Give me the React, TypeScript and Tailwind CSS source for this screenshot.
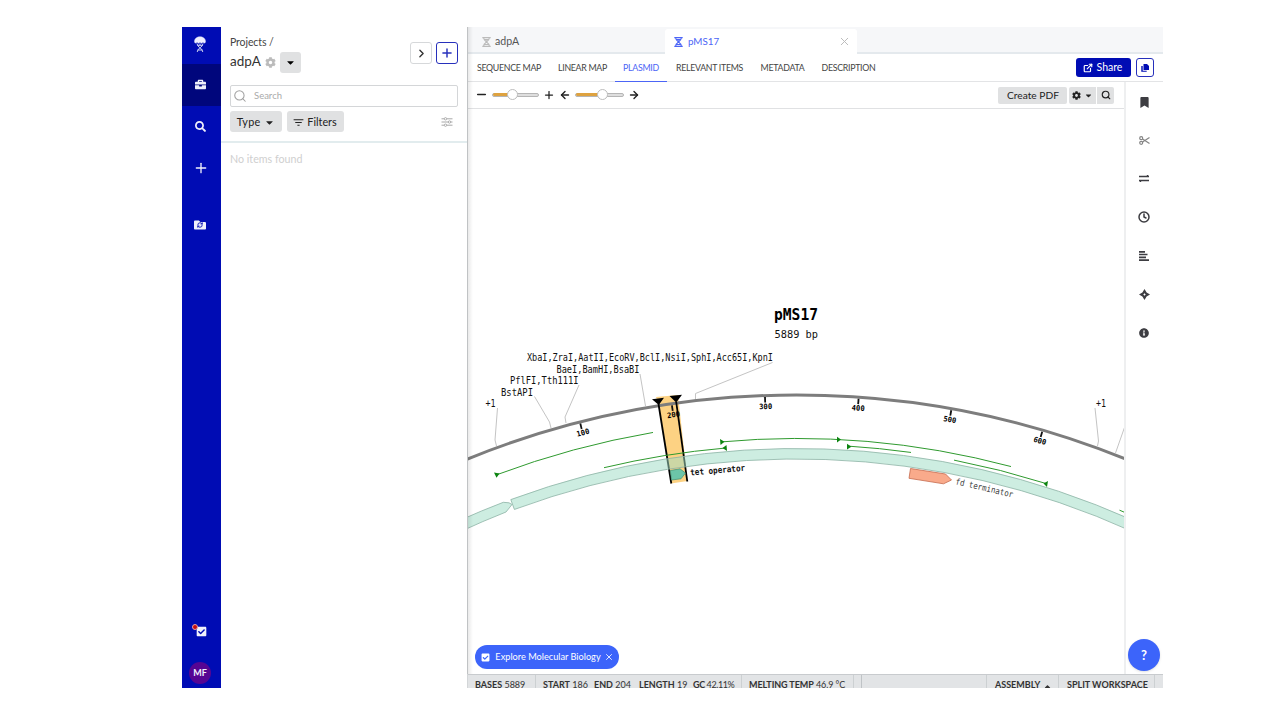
import React from "react";
import { FaBriefcase, FaSearch, FaCog, FaCaretDown, FaCaretUp, FaFolder, FaBookmark, FaInfoCircle, FaCheckSquare } from "react-icons/fa";
import { MdFilterList } from "react-icons/md";
import { ChevronRight, Plus, Minus, ArrowLeft, ArrowRight, Search, X, ExternalLink, Clock, RefreshCw } from "lucide-react";

const CX = 796.5;
const CY = 1273;
const yAt = (r: number, x: number) => CY - Math.sqrt(r * r - (x - CX) * (x - CX));
const arc = (r: number, x1: number, x2: number) =>
  `M${x1} ${yAt(r, x1)}A${r} ${r} 0 0 1 ${x2} ${yAt(r, x2)}`;

const ticks = [
  { label: "100", a: -14.28 },
  { label: "200", a: -8.17 },
  { label: "300", a: -2.06 },
  { label: "400", a: 4.06 },
  { label: "500", a: 10.17 },
  { label: "600", a: 16.28 },
];

const siteLabels = [
  { t: "XbaI,ZraI,AatII,EcoRV,BclI,NsiI,SphI,Acc65I,KpnI", x: 527, y: 361, w: 246 },
  { t: "BaeI,BamHI,BsaBI", x: 556.5, y: 373, w: 83 },
  { t: "PflFI,Tth111I", x: 510, y: 384, w: 68.5 },
  { t: "BstAPI", x: 501, y: 395.5, w: 32 },
  { t: "+1", x: 485.5, y: 407, w: 10 },
  { t: "+1", x: 1096, y: 407, w: 10 },
];

function Mono({ t, x, y, w, size = 9.8, bold = false, rotate = 0, fill = "#111" }: {
  t: string; x: number; y: number; w: number; size?: number; bold?: boolean; rotate?: number; fill?: string;
}) {
  return (
    <text
      x={x}
      y={y}
      textLength={w}
      lengthAdjust="spacingAndGlyphs"
      fontSize={size}
      fontWeight={bold ? 700 : 400}
      fill={fill}
      transform={rotate ? `rotate(${rotate} ${x} ${y})` : undefined}
    >
      {t}
    </text>
  );
}

function PlasmidMap() {
  return (
    <svg className="block h-[565px] w-[657px] shrink-0 font-['DejaVu_Sans_Mono',monospace]" viewBox="468 109 657 565">
      <g fill="none" stroke="#c4c4c4" strokeWidth="1">
        <path d="M497.5 408L495 440L496.5 446" />
        <path d="M534.5 396.5L549.5 422L551 428" />
        <path d="M579 385L565 417L566 423" />
        <path d="M640 374L645.5 406" />
        <path d="M772.5 362.5L695.5 393.5V399" />
        <path d="M1095 408L1098.5 441L1097.5 446" />
        <path d="M1125 426L1115.5 453" />
      </g>
      <path d="M656 397L678 395L687.5 481L671 483.5L658.5 404Z" fill="#fdd283" />
      <path d={arc(878, 460, 1133)} fill="none" stroke="#7d7d7d" strokeWidth="3" />
      {ticks.map(({ label, a }) => (
        <g key={label} transform={`rotate(${a} ${CX} ${CY})`}>
          <path d={`M${CX} ${CY - 876.5}V${CY - 871}`} stroke="#111" strokeWidth="1.8" />
          <Mono t={label} x={CX - 6.2} y={CY - 864.5} w={13} size={7.5} bold fill="#000" />
        </g>
      ))}
      <g stroke="#000" strokeWidth="1.8">
        <path d="M658.5 404L671.3 483.5" />
        <path d="M676.2 402L687.3 481.5" />
      </g>
      <path d="M652 399.2L664 397.8L658.8 405ZM669.5 396L682 394.8L676.2 402.5Z" fill="#000" />
      <path d="M670.3 470.5L680 468.8L685.5 473L681 478.8L671.5 480Z" fill="#6cc5a8" stroke="#3d8f75" strokeWidth=".7" />
      <g fill="#a0dcc6" fillOpacity=".52" stroke="#8bb3a4" strokeWidth=".8">
        <path d={`M460 ${yAt(824.5, 460)}A824.5 824.5 0 0 1 503.3 502.3L509 502.8L512 504.5L506 512A814 814 0 0 0 460 ${yAt(814, 460)}Z`} />
        <path d={`M510.8 ${yAt(824.5, 510.8)}A824.5 824.5 0 0 1 1133 ${yAt(824.5, 1133)}V${yAt(814, 1133)}A814 814 0 0 0 514.4 ${yAt(814, 514.4)}Z`} />
      </g>
      <g fill="none" stroke="#2f9a2f" strokeWidth="1">
        <path d={arc(852.7, 496, 653)} />
        <path d={arc(828, 604, 725)} />
        <path d={arc(834.5, 721, 1011)} />
        <path d={arc(828.5, 848, 911)} />
        <path d={arc(828, 954, 1046)} />
        <path d={arc(828.4, 1119.5, 1130)} />
      </g>
      <g fill="#0c8410">
        <path d="M494 472.5L499.5 473.5L496.5 477.8Z" />
        <path d="M720 439L724.5 441.8L720.5 445Z" />
        <path d="M726.5 445L722.5 448L727 451Z" />
        <path d="M837 436.7L841 439.6L837 442.5Z" />
        <path d="M847 443.7L851.3 446.7L847 449.5Z" />
        <path d="M1048 481L1043.5 483.5L1047 487Z" />
      </g>
      <path d="M910.5 468.5L945.5 474L951.5 480L943.5 483.8L909 478.3Z" fill="#f9aa8b" stroke="#c5694d" strokeWidth=".8" />
      <Mono t="tet operator" x={690.5} y={475.5} w={55} size={8.5} bold rotate={-5} />
      <Mono t="fd terminator" x={955} y={484.2} w={59} size={8.7} rotate={13} fill="#444" />
      <Mono t="pMS17" x={774} y={320} w={44} size={15.5} bold fill="#000" />
      <Mono t="5889 bp" x={774.5} y={337.5} w={43.5} size={11.3} />
      {siteLabels.map((s, i) => (
        <Mono key={i} {...s} />
      ))}
    </svg>
  );
}

function Jellyfish() {
  return (
    <svg className="h-[17px] w-[12px]" viewBox="0 0 12 17" fill="none" stroke="#dfe1f5">
      <path d="M.5 5.500C.5 2.500 3 .800 6 .8s5.500 1.700 5.500 4.700c0 2-2 2-2.600.6C8.400 7.600 6.500 7.600 6 6.100 5.500 7.600 3.600 7.600 3.100 6.100 2.500 7.500.5 7.500.5 5.500z" fill="#eef" strokeWidth=".5" />
      <path d="M3 7.500c0 4 5.800 4.500 5.800 8.500M9 7.500c0 4-5.800 4.500-5.800 8.500M3.500 9.300h5M3.500 14h5M6 7.500v2" strokeWidth=".9" />
    </svg>
  );
}

function Hourglass({ className }: { className: string }) {
  return (
    <svg className={className} viewBox="0 0 9 10" fill="none" stroke="currentColor">
      <path d="M.3 .700h8.400M.3 9.300h8.400" strokeWidth="1.300" />
      <path d="M1.700 1c0 4 5.600 4 5.600 8M7.300 1c0 4-5.600 4-5.600 8M2 2.500h5M2.800 3.700h3.400M2.300 7.500h4.400" strokeWidth="1.100" />
    </svg>
  );
}

function ScissorsIcon({ className }: { className: string }) {
  return (
    <svg className={className} viewBox="0 0 11 9" fill="none" stroke="currentColor" strokeWidth="1.200">
      <circle cx="2.200" cy="2.200" r="1.500" /><circle cx="2.200" cy="6.800" r="1.500" />
      <path d="M3.500 3L10.500 7.500M3.500 6L10.500 1.500" />
    </svg>
  );
}

function Sliders({ className }: { className: string }) {
  return (
    <svg className={className} viewBox="0 0 12 10" fill="none" stroke="currentColor">
      <path d="M.5 1.800h11M.5 5h11M.5 8.200h11" strokeWidth="1" />
      <g fill="white" strokeWidth=".9"><circle cx="4.500" cy="1.800" r="1.200" /><circle cx="8.500" cy="5" r="1.200" /><circle cx="4.500" cy="8.200" r="1.200" /></g>
    </svg>
  );
}

function Slider({ className, fillClass }: { className: string; fillClass: string }) {
  return (
    <div className={`flex h-[4px] items-center rounded-full border border-[#b5b5b5] bg-[#dedede] ${className}`}>
      <div className={`h-[3px] rounded-l-full bg-[#dea23f] ${fillClass}`} />
      <div className="-ml-px size-[11px] shrink-0 rounded-full border border-[#bdbdbd] bg-white" />
    </div>
  );
}

function Sidebar() {
  return (
    <nav className="flex w-[39px] shrink-0 flex-col items-center bg-[#000cb4] text-[#f0f1fb]">
      <div className="flex h-[37px] items-center pr-[3px] pb-[3px]"><Jellyfish /></div>
      <div className="flex h-[42px] w-full items-center justify-center bg-[#00067c] pr-0.5 pb-px">
        <FaBriefcase className="size-[11px]" />
      </div>
      <div className="flex h-[41px] items-center pr-0.5"><FaSearch className="size-[11px]" /></div>
      <div className="flex h-[42px] items-center pr-0.5"><Plus className="size-[16px]" strokeWidth={2} /></div>
      <div className="relative mt-[30px] mr-[3px]">
        <FaFolder className="size-[12px]" />
        <RefreshCw className="absolute top-[3px] left-[3px] size-[6px] text-[#000cb4]" strokeWidth={3.5} />
      </div>
      <div className="relative mt-auto mr-[2px] mb-[25px] ml-px">
        <FaCheckSquare className="size-[11px]" />
        <span className="absolute -top-[2px] -left-[4px] size-[6px] rounded-full border border-[#e9a0a0] bg-[#c50b0b]" />
      </div>
      <div className="mr-[3px] mb-[4px] flex size-[22px] items-center justify-center rounded-full bg-[#560593] text-[9px] font-bold">MF</div>
    </nav>
  );
}

function ProjectPanel() {
  return (
    <aside className="flex w-[246px] shrink-0 flex-col bg-white">
      <header className="flex h-[116px] shrink-0 flex-col border-b-2 border-[#e2ecee] px-[9px]">
        <div className="flex h-[48px] justify-between">
          <div>
            <div className="mt-[8px] h-[14px] text-[10.5px] leading-[14px] tracking-[-0.1px] text-[#444]">Projects /</div>
            <div className="mt-[3px] flex h-[20px] items-center text-[13.5px] text-[#333]">
              <span className="-mt-px w-[33px]">adpA</span>
              <FaCog className="ml-[2px] size-[11px] text-[#bbb]" />
              <button className="ml-[4px] flex size-[21px] items-center justify-center rounded-[3px] bg-[#e0e1e2]"><FaCaretDown className="size-[11px] text-black" /></button>
            </div>
          </div>
          <div className="flex gap-[4px] pt-[15px]">
            <button className="flex size-[22px] items-center justify-center rounded-[3px] border border-[#d6d8da]"><ChevronRight className="size-[13px] text-[#333]" strokeWidth={2.5} /></button>
            <button className="flex size-[22px] items-center justify-center rounded-[3px] border border-[#2730bc] text-[#2730bc]"><Plus className="size-[14px]" strokeWidth={2.5} /></button>
          </div>
        </div>
        <div className="mt-[10px] flex h-[22px] shrink-0 items-center rounded-[2px] border border-[#d4d6d8] pl-[2px] text-[9.5px] text-[#aaa]">
          <Search className="mr-[7px] size-[14px] text-[#a0a0a0]" strokeWidth={1.8} />Search
        </div>
        <div className="mt-[4px] flex h-[21px] items-center text-[10.8px] text-[#222]">
          <button className="flex h-[21px] w-[52px] items-center justify-center gap-[4px] rounded-[3px] bg-[#e0e1e2] pt-px"><span className="tracking-[0.2px]">Type</span><FaCaretDown className="size-[11px]" /></button>
          <button className="ml-[5px] flex h-[21px] w-[57px] items-center justify-center gap-[2px] rounded-[3px] bg-[#e0e1e2] pt-px pr-[2px]"><MdFilterList className="size-[13px]" />Filters</button>
          <Sliders className="mr-[5px] ml-auto h-[10px] w-[12px] text-[#a8a8a8]" />
        </div>
      </header>
      <p className="mt-[9px] ml-[9px] text-[10.7px] leading-[14px] text-[#cfcfcf]">No items found</p>
    </aside>
  );
}

function AppHeader() {
  return (
    <>
      <div className="flex h-[27px] shrink-0 items-end border-b-2 border-[#e4e9ed] bg-[#f6f7f9] text-[10.6px]">
        <div className="flex h-[21px] w-[197px] items-center gap-[4px] pl-[14px] text-[#555]"><Hourglass className="h-[10px] w-[9px] text-[#bbb]" />adpA</div>
        <div className="-mb-[2px] flex h-[25px] w-[192px] items-center gap-[4px] rounded-t-[3px] bg-white pr-[6px] pl-[9px] text-[#4c65f6]">
          <Hourglass className="h-[10px] w-[9px]" /><span className="pl-px text-[9.8px]">pMS17</span><X className="ml-auto size-[13px] text-[#bbb]" strokeWidth={1.8} />
        </div>
      </div>
      <div className="flex h-[28px] shrink-0 items-center border-b border-[#e3e4e6] text-[8.8px] tracking-[-0.29px] text-[#444]">
        <div className="w-[81px] pl-px text-center">SEQUENCE MAP</div>
        <div className="w-[66px] pl-px text-center">LINEAR MAP</div>
        <div className="-mb-px flex h-[28px] w-[52px] items-center justify-center border-b border-[#4c65f6] text-[#4c65f6]">PLASMID</div>
        <div className="w-[85px] text-center">RELEVANT ITEMS</div>
        <div className="w-[60px] pl-px text-center">METADATA</div>
        <div className="w-[72px] pl-px text-center">DESCRIPTION</div>
        <button className="ml-auto flex h-[19px] w-[55px] items-center justify-center gap-[4px] rounded-[3px] bg-[#000cb4] pr-[2px] text-[10.5px] tracking-normal text-white"><ExternalLink className="size-[10px]" strokeWidth={2.8} />Share</button>
        <button className="mr-[9px] ml-[5px] flex h-[19px] w-[18px] items-center justify-center rounded-[3px] border border-[#2730bc]">
          <svg className="size-[8px]" viewBox="0 0 8 8"><path d="M2.500 0h3.500l2 2v4H2.500z" fill="#000cb4" /><path d="M1.700 2H.3v5.700h5.400v-1h-4z" fill="#000cb4" /></svg>
        </button>
      </div>
    </>
  );
}

function Controls() {
  return (
    <div className="flex h-[27px] shrink-0 items-center border-b border-[#e0e1e3] text-[#222]">
      <div className="flex items-center pb-px">
        <Minus className="ml-[7px] size-[13px]" strokeWidth={2.8} />
        <Slider className="ml-[4px] w-[47px]" fillClass="w-[15px]" />
        <Plus className="ml-[4px] size-[12px]" strokeWidth={2.5} />
        <ArrowLeft className="ml-[4px] size-[12px]" strokeWidth={2.8} />
        <Slider className="ml-[4px] w-[49px]" fillClass="w-[22px]" />
        <ArrowRight className="ml-[4px] size-[12px]" strokeWidth={2.8} />
      </div>
      <button className="ml-auto h-[17px] w-[69px] rounded-[2px] bg-[#e0e1e2] pl-px text-[10.2px] leading-[17px]">Create PDF</button>
      <button className="ml-[2px] flex h-[17px] w-[27px] items-center justify-center gap-[3px] rounded-l-[2px] bg-[#e0e1e2]"><FaCog className="size-[9px]" /><FaCaretDown className="size-[9px]" /></button>
      <button className="mr-[10px] ml-px flex h-[17px] w-[17px] items-center justify-center rounded-r-[2px] bg-[#e0e1e2]"><Search className="size-[10px]" strokeWidth={2.8} /></button>
    </div>
  );
}

function ToolRail() {
  const cell = "flex h-[38.4px] items-center justify-center";
  return (
    <div className="flex w-[39px] shrink-0 flex-col border-l-2 border-[#eeeff0] pt-px pr-px text-[#3d3d42]">
      <div className={cell}><FaBookmark className="h-[11px] w-[9px]" /></div>
      <div className={cell}><ScissorsIcon className="h-[9px] w-[11px] text-[#858585]" /></div>
      <div className={cell}>
        <svg className="h-[7px] w-[10px]" viewBox="0 0 10 7" fill="none" stroke="currentColor" strokeWidth="1.500"><path d="M0 1.500h9.500L8 .2M10 5.500H.5L2 6.800" /></svg>
      </div>
      <div className={cell}><Clock className="size-[12px]" strokeWidth={3} /></div>
      <div className={cell}>
        <svg className="size-[10px]" viewBox="0 0 10 10" stroke="currentColor" strokeWidth="1.700"><path d="M0 .8h6M0 3.500h8.500M0 6.300h7M0 9.100h10" /></svg>
      </div>
      <div className={cell}>
        <svg className="size-[11px]" viewBox="0 0 11 11" fill="currentColor"><path fillRule="evenodd" d="M5.500 0L7.600 3.400L11 5.500L7.600 7.600L5.500 11L3.400 7.600L0 5.500L3.400 3.400ZM5.500 4.300L4.300 5.500L5.500 6.700L6.700 5.500Z" /></svg>
      </div>
      <div className={cell}><FaInfoCircle className="size-[10px]" /></div>
    </div>
  );
}

function StatusBar() {
  return (
    <footer className="flex h-[14px] shrink-0 overflow-hidden border-t border-[#c8cbce] bg-[#e2e4e6] text-[9px] leading-[20px] whitespace-nowrap text-[#333]">
      <div className="w-[68px] border-r border-[#ccd0d2] pl-[7px]"><b>BASES</b> 5889</div>
      <div className="flex w-[206px] border-r border-[#ccd0d2] pl-[7px]">
        <span className="w-[51px]"><b>START</b> 186</span>
        <span className="w-[45px]"><b>END</b> 204</span>
        <span className="w-[54px]"><b>LENGTH</b> 19</span>
        <span className="tracking-[-0.4px]"><b>GC</b> 42.11%</span>
      </div>
      <div className="w-[112px] border-r border-[#ccd0d2] pl-[7px] tracking-[-0.08px]"><b>MELTING TEMP</b> 46.9 °C</div>
      <div className="w-[8px] border-r border-[#bfc3c6]" />
      <div className="ml-auto flex w-[72px] gap-[3px] border-l border-[#ccd0d2] pl-[8px] font-bold">ASSEMBLY<FaCaretUp className="mt-[7px] size-[9px]" /></div>
      <div className="mr-[8px] w-[97px] border-x border-[#ccd0d2] pl-[8px] font-bold">SPLIT WORKSPACE</div>
    </footer>
  );
}

export default function App() {
  return (
    <div className="h-[720px] w-[1280px] overflow-hidden bg-white pt-[27px] pl-[182px] font-['Lato',sans-serif]">
      <div className="relative flex h-[661px] w-[981px] overflow-hidden">
        <Sidebar />
        <ProjectPanel />
        <main className="flex w-[696px] flex-col border-l border-[#d3d6d8]">
          <AppHeader />
          <div className="flex h-[592px] shrink-0">
            <section className="flex w-[656px] shrink-0 flex-col overflow-hidden">
              <Controls />
              <PlasmidMap />
            </section>
            <ToolRail />
          </div>
          <StatusBar />
        </main>
        <div className="pointer-events-none absolute top-0 left-[285px] h-[647px] w-[6px] bg-linear-to-r from-black/10 to-transparent" />
        <div className="absolute top-[618px] left-[293px] flex h-[24px] w-[144px] items-center justify-center gap-[3px] rounded-full bg-[#3c64fa] pl-px text-[9.2px] whitespace-nowrap text-white">
          <FaCheckSquare className="mr-[2px] size-[9px]" />Explore Molecular Biology<X className="size-[10px]" />
        </div>
        <div className="absolute top-[612px] left-[946px] flex size-[32px] items-center justify-center rounded-full bg-[#3c64fa] pt-px text-[13px] font-bold text-white shadow">?</div>
      </div>
    </div>
  );
}
